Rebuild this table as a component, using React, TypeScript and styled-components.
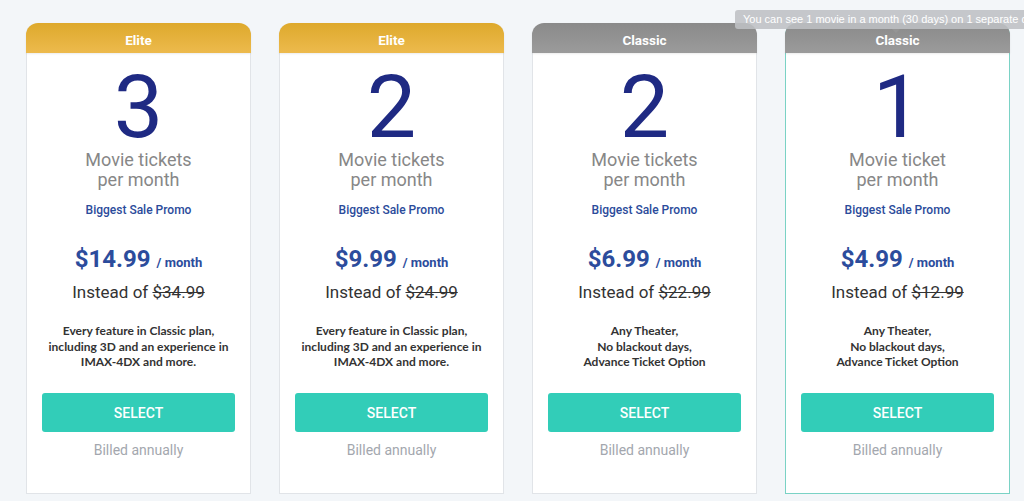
import React from "react";
import styled, { createGlobalStyle, css } from "styled-components";

const Global = createGlobalStyle`
  html, body { margin: 0; padding: 0; overflow: hidden; }
  body { background: #f3f6f9; font-family: Roboto, "Liberation Sans", sans-serif; }
`;

const Page = styled.div`
  position: relative;
  width: 1024px;
  height: 501px;
  box-sizing: border-box;
  padding: 23px 0 0 26px;
  display: flex;
  align-items: flex-start;
  gap: 28px;
`;

type Tier = "elite" | "classic";

const Card = styled.div<{ $selected?: boolean }>`
  width: 225px;
  box-sizing: border-box;
  display: flex;
  flex-direction: column;
  align-items: stretch;
  background: #ffffff;
  border: 1px solid ${(p) => (p.$selected ? "#7ad2c5" : "#e1e4e8")};
  border-top: none;
  border-radius: 12px 12px 0 0;
  padding-bottom: 33px;
`;

const Header = styled.div<{ $tier: Tier }>`
  height: 30px;
  box-sizing: border-box;
  padding-top: 4px;
  margin: 0 -1px;
  border-radius: 12px 12px 0 0;
  display: flex;
  align-items: center;
  justify-content: center;
  color: #ffffff;
  font-family: Roboto, sans-serif;
  font-weight: 700;
  font-size: 13.5px;
  box-shadow: 0 1px 2px rgba(0, 0, 0, 0.08);
  ${(p) =>
    p.$tier === "elite"
      ? css`background: linear-gradient(#dea92c, #edba4d);`
      : css`background: linear-gradient(#8a8a8a, #9b9b9b);`}
`;

const Count = styled.div`
  margin-top: 16px;
  text-align: center;
  font-family: Roboto, sans-serif;
  font-weight: 400;
  font-size: 88px;
  line-height: 76px;
  color: #1f2a83;
`;

const Unit = styled.div`
  margin-top: 5px;
  text-align: center;
  font-family: Roboto, sans-serif;
  font-size: 18px;
  line-height: 20px;
  color: #878787;
`;

const Promo = styled.div`
  margin-top: 12px;
  text-align: center;
  font-family: Roboto, sans-serif;
  font-weight: 500;
  font-size: 12px;
  line-height: 16px;
  color: #2b4b9b;
`;

const PriceRow = styled.div`
  margin-top: 26px;
  display: flex;
  justify-content: center;
  align-items: baseline;
  gap: 6px;
  line-height: 30px;
  color: #2c4c9c;
  font-family: Roboto, sans-serif;
  font-weight: 700;
`;

const Price = styled.span`
  font-size: 24px;
`;

const Per = styled.span`
  font-size: 13px;
`;

const Instead = styled.div`
  margin-top: 3px;
  text-align: center;
  font-family: Roboto, sans-serif;
  font-size: 17px;
  line-height: 22px;
  color: #333333;
`;

const Old = styled.span`
  text-decoration: line-through;
`;

const Desc = styled.div`
  margin-top: 20px;
  height: 46.5px;
  text-align: center;
  font-family: Lato, "Open Sans", sans-serif;
  font-weight: 700;
  font-size: 12px;
  line-height: 15.5px;
  color: #333333;
`;

const Select = styled.button`
  margin: 23.5px 15px 0;
  height: 39px;
  border: none;
  border-radius: 3px;
  background: #32cdb8;
  color: #ffffff;
  font-family: Roboto, sans-serif;
  font-weight: 500;
  font-size: 14px;
  cursor: pointer;
`;

const Billed = styled.div`
  margin-top: 8px;
  text-align: center;
  font-family: Roboto, sans-serif;
  font-size: 14px;
  line-height: 20px;
  color: #a3a7ae;
`;

const Tooltip = styled.div`
  position: absolute;
  left: 735px;
  top: 10px;
  height: 19px;
  padding: 0 8px;
  border-radius: 3px;
  background: rgba(190, 192, 196, 0.88);
  color: #ffffff;
  font-family: "Liberation Sans", Arial, sans-serif;
  font-size: 11px;
  line-height: 19px;
  white-space: nowrap;
  z-index: 2;
  &::after {
    content: "";
    position: absolute;
    left: 157px;
    top: 19px;
    border: 4px solid transparent;
    border-top-color: rgba(150, 150, 150, 0.9);
  }
`;

type Plan = {
  tier: Tier;
  count: string;
  unit: [string, string];
  price: string;
  old: string;
  desc: string[];
  selected?: boolean;
};

const plans: Plan[] = [
  {
    tier: "elite",
    count: "3",
    unit: ["Movie tickets", "per month"],
    price: "$14.99",
    old: "$34.99",
    desc: ["Every feature in Classic plan,", "including 3D and an experience in", "IMAX-4DX and more."],
  },
  {
    tier: "elite",
    count: "2",
    unit: ["Movie tickets", "per month"],
    price: "$9.99",
    old: "$24.99",
    desc: ["Every feature in Classic plan,", "including 3D and an experience in", "IMAX-4DX and more."],
  },
  {
    tier: "classic",
    count: "2",
    unit: ["Movie tickets", "per month"],
    price: "$6.99",
    old: "$22.99",
    desc: ["Any Theater,", "No blackout days,", "Advance Ticket Option"],
  },
  {
    tier: "classic",
    count: "1",
    unit: ["Movie ticket", "per month"],
    price: "$4.99",
    old: "$12.99",
    desc: ["Any Theater,", "No blackout days,", "Advance Ticket Option"],
    selected: true,
  },
];

export default function App() {
  return (
    <>
      <Global />
      <Page>
        {plans.map((p, i) => (
          <Card key={i} $selected={p.selected}>
            <Header $tier={p.tier}>{p.tier === "elite" ? "Elite" : "Classic"}</Header>
            <Count>{p.count}</Count>
            <Unit>
              {p.unit[0]}
              <br />
              {p.unit[1]}
            </Unit>
            <Promo>Biggest Sale Promo</Promo>
            <PriceRow>
              <Price>{p.price}</Price>
              <Per>/ month</Per>
            </PriceRow>
            <Instead>
              Instead of <Old>{p.old}</Old>
            </Instead>
            <Desc>
              {p.desc.map((d, j) => (
                <React.Fragment key={j}>
                  {d}
                  {j < p.desc.length - 1 && <br />}
                </React.Fragment>
              ))}
            </Desc>
            <Select>SELECT</Select>
            <Billed>Billed annually</Billed>
          </Card>
        ))}
        <Tooltip>You can see 1 movie in a month (30 days) on 1 separate day</Tooltip>
      </Page>
    </>
  );
}
